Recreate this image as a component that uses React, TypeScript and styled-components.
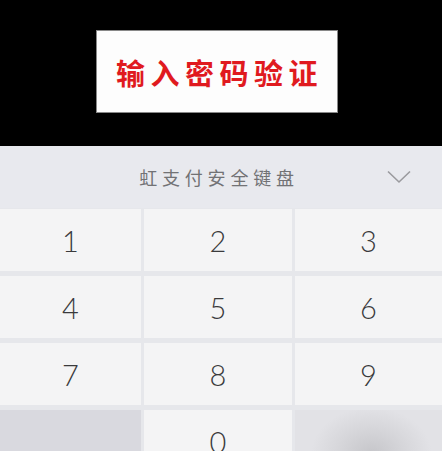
import React from 'react';
import styled, { createGlobalStyle } from 'styled-components';

const Global = createGlobalStyle`
    html, body {
        margin: 0;
        padding: 0;
        background: #000;
        overflow: hidden;
    }
    #root {
        width: 442px;
        height: 451px;
    }
`;

const Page = styled.div`
    width: 442px;
    height: 451px;
    display: flex;
    flex-direction: column;
    background: #e6e7eb;
    overflow: hidden;
    & > * {
        flex-shrink: 0;
    }
`;

const Banner = styled.div`
    height: 146px;
    background: #000;
    padding: 30px 0 0 96px;
    box-sizing: border-box;
`;

const Notice = styled.div`
    width: 242px;
    height: 83px;
    box-sizing: border-box;
    border: 1px solid #888;
    background: #fdfdfd;
    display: flex;
    align-items: center;
    justify-content: center;
    color: #e01a1f;
    font-family: "Noto Sans CJK SC", sans-serif;
    font-weight: 700;
    font-size: 29px;
    letter-spacing: 5.5px;
    padding-left: 5px;
`;

const Header = styled.div`
    height: 62px;
    background: #e8e9ee;
    display: flex;
    align-items: center;
    justify-content: center;
    position: relative;
`;

const Title = styled.span`
    font-family: "Noto Sans CJK SC", sans-serif;
    font-weight: 400;
    font-size: 18px;
    letter-spacing: 4.8px;
    color: #727275;
    margin-left: -4px;
`;

const Collapse = styled.svg`
    position: absolute;
    right: 31px;
    top: 24px;
`;

const Grid = styled.div`
    display: grid;
    grid-template-columns: 141px 148px 147px;
    grid-auto-rows: 62px;
    column-gap: 3px;
    row-gap: 5px;
    padding-top: 1px;
`;

const Key = styled.div<{ $tone?: 'plain' | 'dark' | 'blur' }>`
    display: flex;
    align-items: center;
    justify-content: center;
    background: ${p =>
        p.$tone === 'dark'
            ? '#d9d9df'
            : p.$tone === 'blur'
            ? 'radial-gradient(ellipse 60px 46px at 52% 70%, #c6c6ca 0%, #d6d6da 55%, #e2e2e6 100%)'
            : '#f4f4f5'};
    color: #3a3a3c;
    font-family: "Lato", "DejaVu Sans", sans-serif;
    font-weight: 300;
    font-size: 29px;
`;

const digits = ['1', '2', '3', '4', '5', '6', '7', '8', '9'];

export default function App() {
    return (
        <>
            <Global />
            <Page>
                <Banner>
                    <Notice>输入密码验证</Notice>
                </Banner>
                <Header>
                    <Title>虹支付安全键盘</Title>
                    <Collapse width="24" height="14" viewBox="0 0 24 14">
                        <path d="M1 1.5 L12 12 L23 1.5" fill="none" stroke="#9a9a9e" strokeWidth="1.6" />
                    </Collapse>
                </Header>
                <Grid>
                    {digits.map(d => (
                        <Key key={d}>{d}</Key>
                    ))}
                    <Key $tone="dark" />
                    <Key>0</Key>
                    <Key $tone="blur" />
                </Grid>
            </Page>
        </>
    );
}
